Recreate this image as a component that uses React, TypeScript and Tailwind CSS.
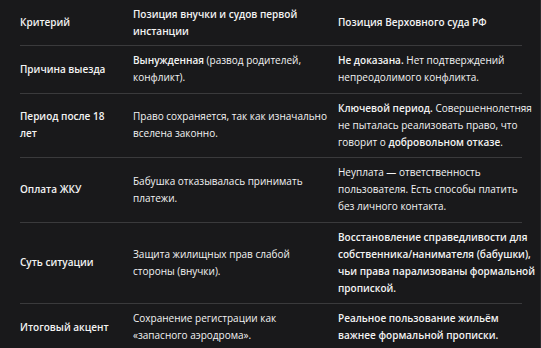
const B = ({ children }: { children: React.ReactNode }) => <span className="font-semibold">{children}</span>

const rows: { c: React.ReactNode; p: React.ReactNode; s: React.ReactNode }[] = [
  {
    c: 'Причина выезда',
    p: (
      <>
        <B>Вынужденная</B> (развод родителей,
        <br />
        конфликт).
      </>
    ),
    s: (
      <>
        <B>Не доказана.</B> Нет подтверждений
        <br />
        непреодолимого конфликта.
      </>
    ),
  },
  {
    c: (
      <>
        Период после 18
        <br />
        лет
      </>
    ),
    p: (
      <>
        Право сохраняется, так как изначально
        <br />
        вселена законно.
      </>
    ),
    s: (
      <>
        <B>Ключевой период.</B> Совершеннолетняя
        <br />
        не пыталась реализовать право, что
        <br />
        говорит о <B>добровольном отказе</B>.
      </>
    ),
  },
  {
    c: 'Оплата ЖКУ',
    p: (
      <>
        Бабушка отказывалась принимать
        <br />
        платежи.
      </>
    ),
    s: (
      <>
        Неуплата — ответственность
        <br />
        пользователя. Есть способы платить
        <br />
        без личного контакта.
      </>
    ),
  },
  {
    c: 'Суть ситуации',
    p: (
      <>
        Защита жилищных прав слабой
        <br />
        стороны (внучки).
      </>
    ),
    s: (
      <B>
        Восстановление справедливости для
        <br />
        собственника/нанимателя (бабушки),
        <br />
        чьи права парализованы формальной
        <br />
        пропиской.
      </B>
    ),
  },
  {
    c: 'Итоговый акцент',
    p: (
      <>
        Сохранение регистрации как
        <br />
        «запасного аэродрома».
      </>
    ),
    s: (
      <B>
        Реальное пользование жильём
        <br />
        важнее формальной прописки.
      </B>
    ),
  },
]

export default function App() {
  return (
    <div
      className="h-[348px] w-[541px] overflow-hidden border-r border-[#2c2c2e] bg-[#19191b] pl-5 text-[10px] leading-[17px] text-[#f3f3f3]"
      style={{ fontFamily: '"Open Sans", "Noto Sans", sans-serif' }}
    >
      <table className="w-[502px] table-fixed border-collapse">
        <colgroup>
          <col className="w-[113px]" />
          <col className="w-[205px]" />
          <col className="w-[184px]" />
        </colgroup>
        <thead>
          <tr className="border-b border-[#3a3a3c]">
            <th className="whitespace-nowrap py-[5.5px] text-left align-middle font-semibold">Критерий</th>
            <th className="whitespace-nowrap py-[5.5px] text-left align-middle font-semibold">
              Позиция внучки и судов первой
              <br />
              инстанции
            </th>
            <th className="whitespace-nowrap py-[5.5px] text-left align-middle font-semibold">Позиция Верховного суда РФ</th>
          </tr>
        </thead>
        <tbody>
          {rows.map((r, i) => (
            <tr key={i} className="border-b border-[#3a3a3c] last:border-b-0">
              <td className="whitespace-nowrap py-[6.25px] align-middle font-semibold">{r.c}</td>
              <td className="whitespace-nowrap py-[6.25px] align-middle">{r.p}</td>
              <td className="whitespace-nowrap py-[6.25px] align-middle">{r.s}</td>
            </tr>
          ))}
        </tbody>
      </table>
    </div>
  )
}
